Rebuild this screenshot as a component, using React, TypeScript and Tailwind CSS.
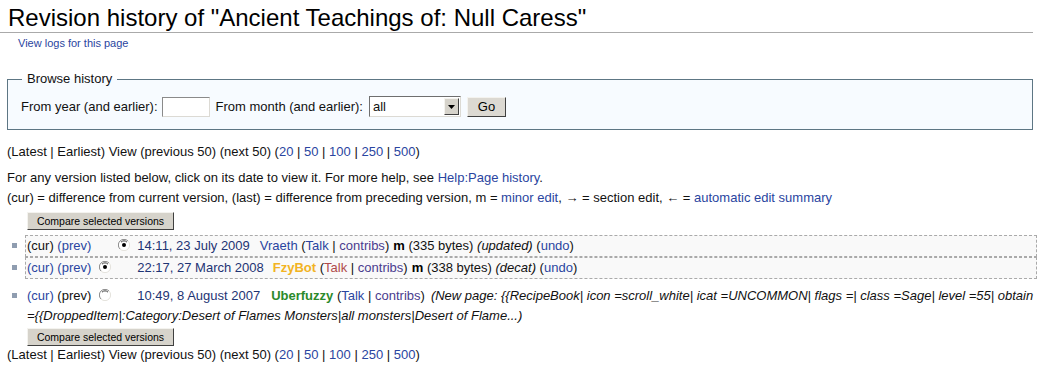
import React from 'react';

const link = 'text-[#2a45a0]';
const dateLink = 'text-[#1e3474]';
const visited = 'text-[#4a3c8e]';

function Radio({ checked, hidden }: { checked?: boolean; hidden?: boolean }) {
  return (
    <svg
      width="12"
      height="12"
      viewBox="0 0 12 12"
      className={`inline-block align-[-1px] ${hidden ? 'invisible' : ''}`}
    >
      <circle cx="6" cy="6" r="5.5" fill="#fff" />
      <path d="M10 2 A5.5 5.5 0 0 0 2 10" fill="none" stroke="#8a8a8a" strokeWidth="1" />
      <path d="M3 3.2 A4 4 0 0 1 9 3.2" fill="none" stroke="#404040" strokeWidth="1" />
      <path d="M2 10 A5.5 5.5 0 0 0 10 2" fill="none" stroke="#e4e2dc" strokeWidth="1" />
      {checked && <circle cx="6" cy="6" r="2" fill="#000" />}
    </svg>
  );
}

function CompareButton() {
  return (
    <button className="ml-[27px] flex h-[18px] w-[147px] items-center justify-center border border-t-[#f4f3ef] border-l-[#f4f3ef] border-b-[#404040] border-r-[#404040] bg-[#d6d3cb] text-[10.5px] leading-none text-black">
      Compare selected versions
    </button>
  );
}

function Bullet() {
  return (
    <div className="flex w-[25px] shrink-0 justify-start pl-[12px] pt-[8px]">
      <span className="block h-[5px] w-[5px] bg-[#8f9db0]" />
    </div>
  );
}

function Paging() {
  return (
    <>
      (Latest | Earliest) View (previous 50) (next 50) (<span className={link}>20</span> |{' '}
      <span className={link}>50</span> | <span className={link}>100</span> |{' '}
      <span className={link}>250</span> | <span className={link}>500</span>)
    </>
  );
}

export default function App() {
  return (
    <div className="h-[371px] w-[1048px] overflow-hidden bg-white font-['Liberation_Sans',Arial,sans-serif] text-[13px] text-[#111]">
      <h1 className="mr-[15px] border-b border-[#aaa] pl-[8px] pt-[4px] text-[24px] font-normal leading-[28px] text-black">
        Revision history of "Ancient Teachings of: Null Caress"
      </h1>
      <div className={`mt-[3px] pl-[18px] text-[11px] leading-[14px] ${link}`}>View logs for this page</div>

      <fieldset className="ml-[7px] mt-[22px] w-[1026px] border border-[#5d7684] bg-[#f7fbff] px-[13px] pb-[12px] pt-[10px]">
        <legend className="ml-[1px] px-[5px] leading-[14px]">Browse history</legend>
        <div className="flex h-[21px] items-center">
          <span>From year (and earlier):</span>
          <div className="ml-[4px] h-[20px] w-[48px] border border-t-[#8a8a8a] border-l-[#8a8a8a] border-b-[#dcdad4] border-r-[#dcdad4] bg-white" />
          <span className="ml-[6px]">From month (and earlier):</span>
          <div className="ml-[6px] flex h-[21px] w-[92px] items-center border border-t-[#6f6f6f] border-l-[#6f6f6f] border-b-[#dcdad4] border-r-[#dcdad4] bg-white">
            <span className="flex-1 pl-[3px]">all</span>
            <span className="mr-[1px] flex h-[17px] w-[15px] items-center justify-center border border-t-[#f4f3ef] border-l-[#f4f3ef] border-b-[#404040] border-r-[#404040] bg-[#d6d3cb]">
              <svg width="7" height="4" viewBox="0 0 7 4">
                <path d="M0 0 H7 L3.5 4 Z" fill="#000" />
              </svg>
            </span>
          </div>
          <button className="ml-[6px] flex h-[20px] w-[39px] items-center justify-center border border-t-[#f4f3ef] border-l-[#f4f3ef] border-b-[#404040] border-r-[#404040] bg-[#dcd9d2] text-[13px] text-black">
            Go
          </button>
        </div>
      </fieldset>

      <p className="ml-[7px] mt-[14px] leading-[16px]">
        <Paging />
      </p>
      <div className="ml-[7px] mt-[8px] leading-[20px]">
        <p>
          For any version listed below, click on its date to view it. For more help, see{' '}
          <span className={link}>Help:Page history</span>.
        </p>
        <p>
          (cur) = difference from current version, (last) = difference from preceding version, m ={' '}
          <span className={link}>minor edit</span>, → = section edit, ← ={' '}
          <span className={link}>automatic edit summary</span>
        </p>
      </div>

      <div className="mt-[4px]">
        <CompareButton />
      </div>

      <ul className="mt-[5px]">
        <li className="flex">
          <Bullet />
          <div className="h-[22px] w-[1012px] whitespace-nowrap border border-dashed border-[#aaa] bg-[#f9f9f9] pl-[1px] leading-[20px]">
            (cur) <span className={link}>(prev)</span>
            <span className="ml-[8px]"><Radio hidden /></span>
            <span className="ml-[7px]"><Radio checked /></span>
            <span className={`ml-[7px] ${dateLink}`}>14:11, 23 July 2009</span>
            <span className={`ml-[10px] ${link}`}>Vraeth</span> (<span className={link}>Talk</span> |{' '}
            <span className={visited}>contribs</span>)
            <b className="ml-[4px] text-black">m</b> (335 bytes) <i>(updated)</i> (<span className={link}>undo</span>)
          </div>
        </li>
        <li className="flex">
          <Bullet />
          <div className="h-[22px] w-[1012px] whitespace-nowrap border border-dashed border-[#aaa] bg-[#f9f9f9] pl-[1px] leading-[20px]">
            <span className={link}>(cur)</span> <span className={link}>(prev)</span>
            <span className="ml-[8px]"><Radio checked /></span>
            <span className="ml-[7px]"><Radio hidden /></span>
            <span className={`ml-[7px] ${dateLink}`}>22:17, 27 March 2008</span>
            <b className="ml-[9px] text-[#f2b322]">FzyBot</b> (<span className="text-[#b04a4a]">Talk</span> |{' '}
            <span className={visited}>contribs</span>)
            <b className="ml-[4px] text-black">m</b> (338 bytes) <i>(decat)</i> (<span className={link}>undo</span>)
          </div>
        </li>
        <li className="mt-[6px] flex">
          <Bullet />
          <div className="w-[1012px] whitespace-nowrap border border-transparent pl-[1px] leading-[20px]">
            <span className={link}>(cur)</span> (prev)
            <span className="ml-[8px]"><Radio /></span>
            <span className="ml-[7px]"><Radio hidden /></span>
            <span className={`ml-[7px] ${dateLink}`}>10:49, 8 August 2007</span>
            <b className="ml-[11px] text-[#2b8a2b]">Uberfuzzy</b> (<span className={link}>Talk</span> |{' '}
            <span className={visited}>contribs</span>)
            <i className="ml-[6px]">
              (New page: {'{{'}RecipeBook| icon =scroll_white| icat =UNCOMMON| flags =| class =Sage| level =55| obtain
              <br />={'{{'}DroppedItem|:Category:Desert of Flames Monsters|all monsters|Desert of Flame...)
            </i>
          </div>
        </li>
      </ul>

      <div className="mt-[1px]">
        <CompareButton />
      </div>
      <p className="ml-[7px] leading-[18px]">
        <Paging />
      </p>
    </div>
  );
}
